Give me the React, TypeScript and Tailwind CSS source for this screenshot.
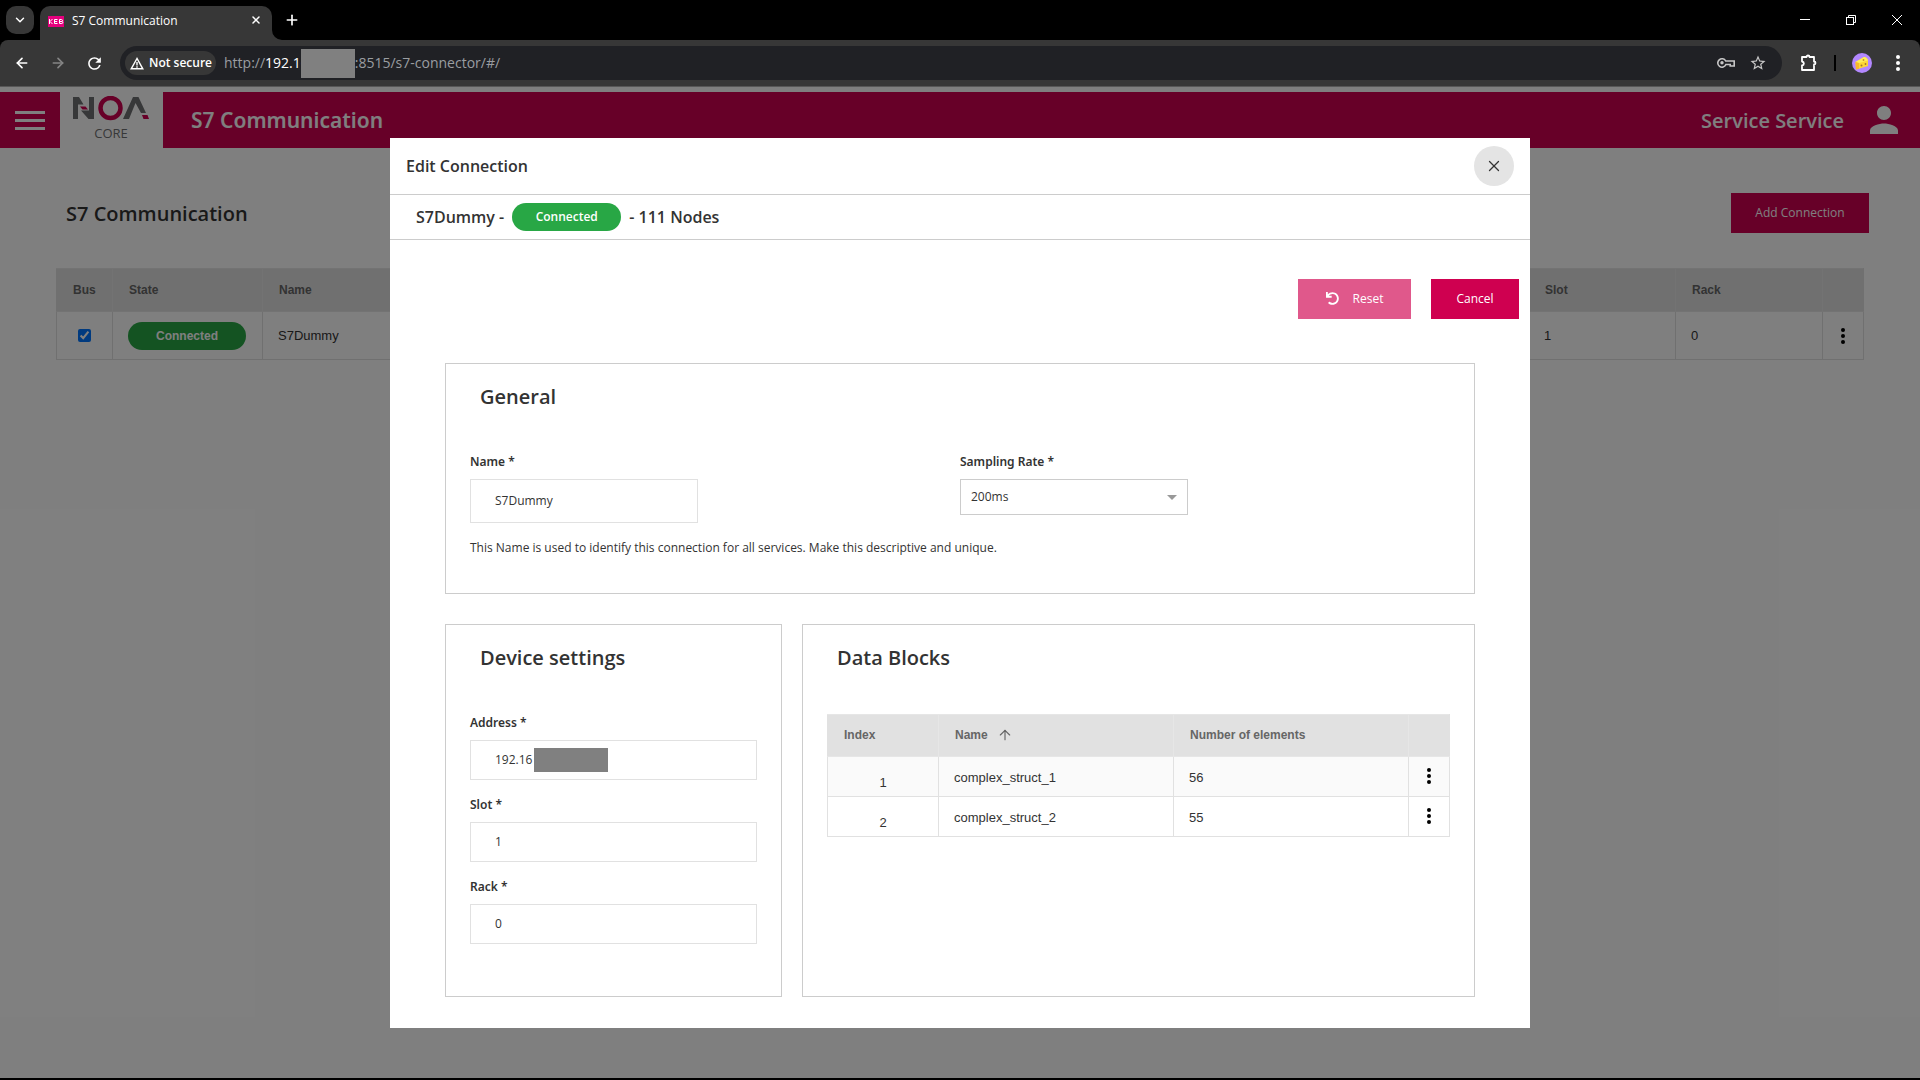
import React from "react";
import { ArrowLeft, ArrowRight, ArrowUp, ChevronDown, Plus, X } from "lucide-react";
import { FaUndo } from "react-icons/fa";
import { MdPerson, MdRefresh, MdStarBorder } from "react-icons/md";

const COLORS = { brand: "#cf0050", logo: "#6f7072" };

function Dots({ className = "" }: { className?: string }) {
  return (
    <svg viewBox="0 0 4 16" width="4" height="16" fill="currentColor" className={className} aria-hidden="true">
      <circle cx="2" cy="2" r="2" />
      <circle cx="2" cy="8" r="2" />
      <circle cx="2" cy="14" r="2" />
    </svg>
  );
}

function CheeseAvatar() {
  return (
    <svg viewBox="0 0 20 20" width="20" height="20" aria-hidden="true">
      <circle cx="10" cy="10" r="10" fill="#b388ff" />
      <path d="M3.500 9 12 4c2 0 3.500 1.500 4 3.500v5.500L4 16.500z" fill="#fdd835" />
      <path d="M3.500 9 12 4c2 0 3.500 1.500 4 3.500L7 10z" fill="#ffee58" />
      <path d="M3.500 9 7 10v5.700L4 16.500z" fill="#f9b82a" />
      <circle cx="9.500" cy="12.500" r="1" fill="#a9742c" />
      <circle cx="13.500" cy="11" r=".9" fill="#a9742c" />
      <circle cx="11.500" cy="7" r=".9" fill="#c98f2b" />
    </svg>
  );
}

function TabStrip() {
  return (
    <div className="flex h-10 items-end bg-black text-white">
      <button aria-label="Search tabs" className="mb-1.5 ml-1.5 flex size-7 items-center justify-center rounded-[10px] bg-[#373737]">
        <ChevronDown size={14} strokeWidth={2.5} />
      </button>
      <div className="ml-1.5 flex h-[34px] w-[232px] items-center rounded-t-[10px] bg-[#373737] pr-2 pl-2">
        <svg viewBox="0 0 16 11" width="16" height="11" aria-hidden="true" className="-mt-1">
          <rect width="16" height="11" fill="#e5007d" />
          <path
            d="M1.500 3v5M4.500 3 2 5.500 4.500 8M9.500 3.500H6.500v4h3M6.500 5.500h2.700M11.500 3.500h2c1.300 0 1.300 2 0 2h-2zM11.500 5.500h2.300c1.300 0 1.300 2 0 2h-2.300z"
            stroke="#fff"
            fill="none"
          />
        </svg>
        <span className="ml-2 flex-1 pb-1 text-xs">S7 Communication</span>
        <button aria-label="Close tab" className="mb-1.5 flex size-4 items-center justify-center">
          <X size={12} strokeWidth={3} />
        </button>
      </div>
      <svg width="10" height="10" viewBox="0 0 10 10" fill="#373737" aria-hidden="true">
        <path d="M0 0a10 10 0 0 0 10 10H0z" />
      </svg>
      <button aria-label="New tab" className="mb-3 ml-0.5 flex size-4 items-center justify-center">
        <Plus size={16} strokeWidth={2.5} />
      </button>
      <div className="ml-auto flex h-10 items-center">
        <button aria-label="Minimize" className="flex h-10 w-[46px] items-center justify-center">
          <svg width="10" height="10" viewBox="0 0 10 10" stroke="#fff"><path d="M0 4.500h10" /></svg>
        </button>
        <button aria-label="Restore" className="flex h-10 w-[46px] items-center justify-center">
          <svg width="10" height="10" viewBox="0 0 10 10" stroke="#fff" fill="none">
            <rect x=".5" y="2.500" width="7" height="7" />
            <path d="M2.500 2.500v-2h7v7h-2" />
          </svg>
        </button>
        <button aria-label="Close window" className="flex h-10 w-[46px] items-center justify-center">
          <svg width="10" height="10" viewBox="0 0 10 10" stroke="#fff"><path d="m0 0 10 10M10 0 0 10" /></svg>
        </button>
      </div>
    </div>
  );
}

function Toolbar() {
  return (
    <div className="bg-black">
      <div className="flex h-[47px] items-center rounded-t-lg border-b border-[#575757] bg-[#373737] text-white">
        <div className="flex w-[120px] items-center gap-4 pl-3">
          <button aria-label="Back" className="flex size-5 items-center justify-center"><ArrowLeft size={16} strokeWidth={2.5} /></button>
          <button aria-label="Forward" className="flex size-5 items-center justify-center text-[#858585]"><ArrowRight size={16} strokeWidth={2.5} /></button>
          <button aria-label="Reload" className="flex size-5 items-center justify-center"><MdRefresh size={19} /></button>
        </div>
        <div className="flex h-[34px] flex-1 items-center rounded-full bg-[#202125] pl-[5px]">
          <button className="flex h-6 w-[91px] items-center gap-[5px] rounded-full bg-[#373737] pl-[5px] text-xs font-semibold whitespace-nowrap">
            <svg viewBox="0 0 14 13" width="14" height="13" fill="none" stroke="#fff" strokeWidth="1.4" aria-hidden="true" className="shrink-0">
              <path d="M7 1.500 1.200 11.800h11.600zM7 5v3.500M7 9.300v1.400" />
            </svg>
            Not secure
          </button>
          <div className="ml-2 flex items-center text-sm text-[#9a9da1]">
            <span>http://</span>
            <span className="text-white">192.16</span>
            <span className="-ml-2 h-[29px] w-[54px] bg-[#808080]" />
            <span>:8515/s7-connector/#/</span>
          </div>
          <div className="mr-[15px] ml-auto flex items-center gap-3.5 text-[#c7c7c7]">
            <svg viewBox="0 0 18 12" width="18" height="12" fill="none" stroke="currentColor" strokeWidth="1.6" aria-hidden="true">
              <path d="M8.700 4h8.500v5h-4V7.500H8.900A4.200 4.200 0 1 1 8.700 4z" />
              <circle cx="5" cy="5.800" r="1.700" fill="currentColor" stroke="none" />
            </svg>
            <button aria-label="Bookmark this page"><MdStarBorder size={18} /></button>
          </div>
        </div>
        <button aria-label="Extensions" className="ml-[18px]">
          <svg viewBox="0 0 18 18" width="18" height="18" fill="none" stroke="#fff" strokeWidth="1.8" strokeLinejoin="round" aria-hidden="true">
            <path d="M2 3h4.500a1.500 1.500 0 0 1 3 0H14v4.500a1.500 1.500 0 0 1 0 3V16H2v-4.500c2.500-.5 2.500-3.500 0-4z" />
          </svg>
        </button>
        <span className="ml-4 h-4 w-0.5 bg-black" />
        <button aria-label="Profile" className="ml-4"><CheeseAvatar /></button>
        <button aria-label="Browser menu" className="mr-5 ml-6"><Dots /></button>
      </div>
    </div>
  );
}

function NoaLogo() {
  return (
    <svg viewBox="1 0 77 48" width="77" height="48" aria-hidden="true">
      <path d="M1 1h6l4.500 7.500H6V23H1zM17 1h5v22h-5.500L9 14.500h8z" fill={COLORS.logo} />
      <path d="M8 10.500h5.500l2.500 3h-5.500z" fill={COLORS.brand} />
      <circle cx="38.500" cy="12" r="10" fill="none" stroke={COLORS.brand} strokeWidth="4.500" />
      <path d="M51 23 61 1h5.500L74 17h-5L63.500 7 57 23z" fill={COLORS.logo} />
      <path d="M70 19h5.500l1.500 4h-5.500z" fill={COLORS.brand} />
      <text x="39" y="42" textAnchor="middle" fontFamily="Open Sans, sans-serif" fontSize="13" fill={COLORS.logo}>CORE</text>
    </svg>
  );
}

function StatusBadge({ className }: { className: string }) {
  return (
    <span className={`flex h-7 items-center justify-center rounded-full bg-[#28a745] text-xs text-white ${className}`}>
      Connected
    </span>
  );
}

const TH = "border border-[#e6e6e6] bg-[#e1e1e1] px-4 text-left text-xs font-bold text-[#666] first:border-l-[#e1e1e1] last:border-r-[#e1e1e1]";
const TD = "border border-[#e1e1e1] px-[15px]";

function ConnectionsPage() {
  return (
    <div className="flex-1 bg-white">
      <header className="mt-[5px] flex h-14 items-center bg-[#cf0050] text-white">
        <button aria-label="Menu" className="flex h-14 w-[60px] items-center justify-center">
          <span className="flex w-[30px] flex-col gap-[5px]">
            <span className="h-[3px] bg-white" />
            <span className="h-[3px] bg-white" />
            <span className="h-[3px] bg-white" />
          </span>
        </button>
        <div className="flex h-full w-[103px] items-center justify-center bg-white">
          <NoaLogo />
        </div>
        <span className="ml-7 pt-0.5 font-['Noto_Sans',sans-serif] text-[21px] font-semibold">S7 Communication</span>
        <span className="ml-auto pt-0.5 text-xl font-semibold">Service Service</span>
        <MdPerson size={42} className="mr-[15px] ml-[19px]" />
      </header>

      <main className="pt-[45px] pr-14 pl-14">
        <div className="-mr-[5px] flex h-10 items-center justify-between pl-[10px]">
          <h1 className="pt-0.5 text-xl font-semibold text-[#333]">S7 Communication</h1>
          <button className="h-10 w-[138px] bg-[#cf0050] text-xs text-white">Add Connection</button>
        </div>
        <table className="mt-[35px] w-full table-fixed border-collapse font-['Liberation_Sans',sans-serif]">
          <colgroup>
            <col className="w-14" />
            <col className="w-[150px]" />
            <col />
            <col className="w-[147px]" />
            <col className="w-[147px]" />
            <col className="w-[41px]" />
          </colgroup>
          <thead>
            <tr className="h-[43px]">
              <th className={TH}>Bus</th>
              <th className={TH}>State</th>
              <th className={TH}>Name</th>
              <th className={TH}>Slot</th>
              <th className={TH}>Rack</th>
              <th className={TH} />
            </tr>
          </thead>
          <tbody>
            <tr className="h-12 text-[13px] text-[#333]">
              <td className={TD}>
                <input type="checkbox" aria-label="Bus active for S7Dummy" defaultChecked className="mx-auto block size-[13px]" />
              </td>
              <td className={TD}><StatusBadge className="w-[118px] font-bold" /></td>
              <td className={TD}>S7Dummy</td>
              <td className={TD}>1</td>
              <td className={TD}>0</td>
              <td className="border border-[#e1e1e1] text-black">
                <button aria-label="Row actions" className="mx-auto block"><Dots /></button>
              </td>
            </tr>
          </tbody>
        </table>
      </main>
    </div>
  );
}

const LABEL = "font-['Noto_Sans',sans-serif] text-xs leading-[18px] font-semibold";

function Field({ id, label, value, redacted }: { id: string; label: string; value: string; redacted?: boolean }) {
  return (
    <div className="flex flex-col gap-2">
      <label htmlFor={id} className={LABEL}>{label}</label>
      <div className="relative">
        <input id={id} defaultValue={value} className="h-10 w-full border border-[#e1e1e1] px-6 text-xs outline-none" />
        {redacted && <span className="absolute top-2 left-16 h-6 w-[74px] bg-[#808080]" />}
      </div>
    </div>
  );
}

const BLOCKS = [
  { index: 1, name: "complex_struct_1", count: 56 },
  { index: 2, name: "complex_struct_2", count: 55 },
];

const PANEL = "border border-[#ccc] px-6 text-[#333]";
const PANEL_TITLE = "pt-[19px] pl-[10px] text-xl leading-7 font-semibold";

function EditDialog() {
  return (
    <div role="dialog" aria-modal="true" aria-labelledby="dialog-title" className="w-[1140px] max-w-full bg-white pb-[31px] text-[#333]">
      <div className="flex h-[57px] items-center justify-between border-b border-[#ccc] pr-4 pl-4">
        <h2 id="dialog-title" className="text-base font-semibold">Edit Connection</h2>
        <button aria-label="Close" className="flex size-10 items-center justify-center rounded-full bg-[#e4e4e4]">
          <X size={18} strokeWidth={1.75} />
        </button>
      </div>
      <div className="flex h-[45px] items-center gap-2 border-b border-[#ccc] pl-[26px] text-base font-semibold">
        <span>S7Dummy -</span>
        <StatusBadge className="w-[109px]" />
        <span>- 111 Nodes</span>
      </div>

      <div className="flex justify-end gap-5 pt-[39px] pr-[11px] text-xs text-white">
        <button disabled className="flex h-10 w-[113px] items-center justify-center gap-3.5 bg-[#e0588b]">
          <FaUndo size={13} />
          Reset
        </button>
        <button className="h-10 w-[88px] bg-[#cf0050]">Cancel</button>
      </div>

      <div className="flex flex-col gap-[30px] px-[55px] pt-11">
        <section className={`${PANEL} h-[231px]`}>
          <h3 className={PANEL_TITLE}>General</h3>
          <div className="grid grid-cols-2 pt-[42px] text-xs">
            <div className="flex flex-col gap-2">
              <label htmlFor="name" className={LABEL}>Name *</label>
              <input id="name" defaultValue="S7Dummy" className="h-11 w-[228px] border border-[#e1e1e1] px-6 outline-none" />
            </div>
            <div className="flex flex-col gap-2">
              <label htmlFor="rate" className={LABEL}>Sampling Rate *</label>
              <div className="relative w-[228px]">
                <select id="rate" className="h-9 w-full appearance-none border border-[#ccc] px-[10px] outline-none">
                  <option>200ms</option>
                </select>
                <svg viewBox="0 0 10 5" width="10" height="5" fill="#999" aria-hidden="true" className="pointer-events-none absolute top-4 right-[11px]">
                  <path d="M0 0h10L5 5z" />
                </svg>
              </div>
            </div>
          </div>
          <p className="pt-4 text-xs leading-[18px]">
            This Name is used to identify this connection for all services. Make this descriptive and unique.
          </p>
        </section>

        <div className="flex gap-5">
          <section className={`${PANEL} w-[337px] shrink-0 pb-[52px]`}>
            <h3 className={PANEL_TITLE}>Device settings</h3>
            <div className="flex flex-col gap-4 pt-[42px]">
              <Field id="address" label="Address *" value="192.16" redacted />
              <Field id="slot" label="Slot *" value="1" />
              <Field id="rack" label="Rack *" value="0" />
            </div>
          </section>
          <section className={`${PANEL} flex-1`}>
            <h3 className={PANEL_TITLE}>Data Blocks</h3>
            <table className="mt-[42px] w-full table-fixed border-collapse font-['Liberation_Sans',sans-serif]">
              <colgroup>
                <col className="w-[111px]" />
                <col />
                <col />
                <col className="w-[41px]" />
              </colgroup>
              <thead>
                <tr className="h-[42px]">
                  <th className={TH}>Index</th>
                  <th className={TH} aria-sort="ascending">
                    <span className="flex items-center gap-[9px]">
                      Name
                      <ArrowUp size={16} strokeWidth={1.75} />
                    </span>
                  </th>
                  <th className={TH}>Number of elements</th>
                  <th className={TH} />
                </tr>
              </thead>
              <tbody>
                {BLOCKS.map((b) => (
                  <tr key={b.index} className="h-10 text-[13px] odd:bg-[#fafafa]">
                    <td className={`${TD} pt-3.5 text-center`}>{b.index}</td>
                    <td className={`${TD} pt-[3px]`}>{b.name}</td>
                    <td className={`${TD} pt-[3px]`}>{b.count}</td>
                    <td className="border border-[#e1e1e1] text-black">
                      <button aria-label={`Actions for ${b.name}`} className="mx-auto block"><Dots /></button>
                    </td>
                  </tr>
                ))}
              </tbody>
            </table>
          </section>
        </div>
      </div>
    </div>
  );
}

export default function App() {
  return (
    <div className="flex min-h-screen flex-col border-b-2 border-black font-['Open_Sans',sans-serif]">
      <TabStrip />
      <Toolbar />
      <div className="relative flex flex-1 flex-col bg-white">
        <ConnectionsPage />
        <div className="absolute inset-0 flex items-center justify-center bg-black/50">
          <EditDialog />
        </div>
      </div>
    </div>
  );
}
